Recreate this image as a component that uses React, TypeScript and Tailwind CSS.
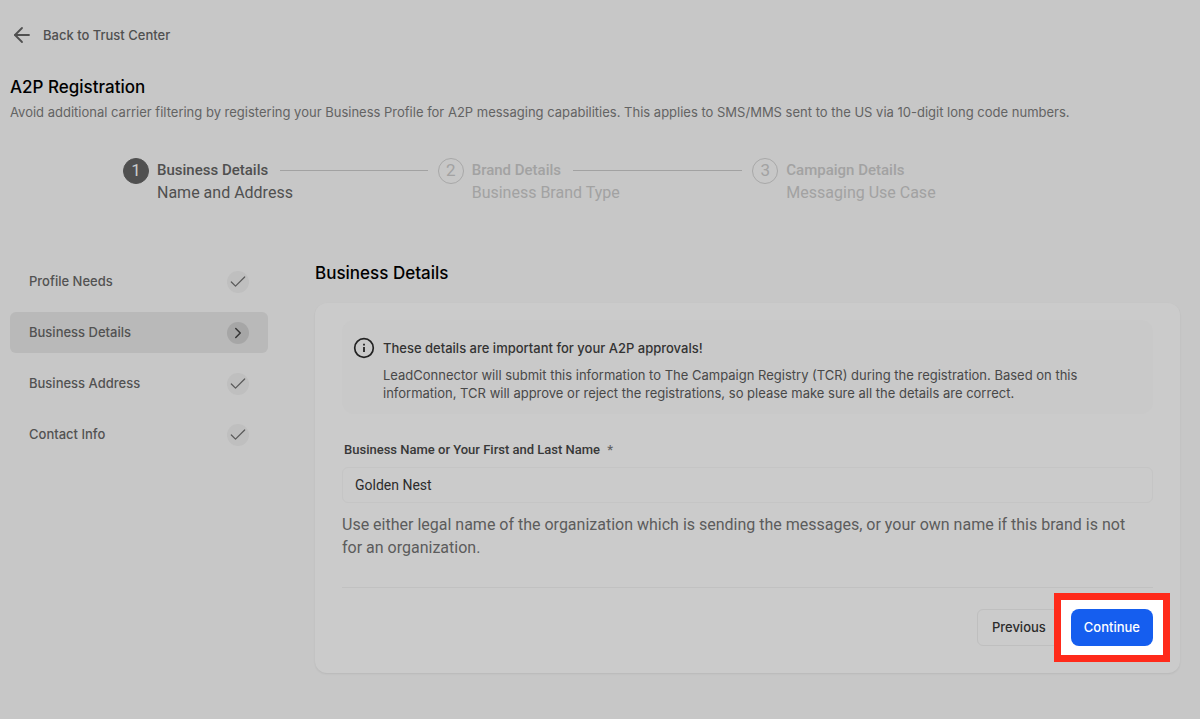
import React, { useState } from 'react';
import { ArrowLeft, Check, ChevronRight } from 'lucide-react';

const steps = [
  { title: 'Business Details', caption: 'Name and Address' },
  { title: 'Brand Details', caption: 'Business Brand Type' },
  { title: 'Campaign Details', caption: 'Messaging Use Case' },
];

const sections = ['Profile Needs', 'Business Details', 'Business Address', 'Contact Info'];

function InfoIcon() {
  return (
    <svg width="22" height="22" viewBox="0 0 22 22" fill="none" stroke="currentColor" className="shrink-0 text-[#222222]">
      <circle cx="11" cy="11" r="9.3" strokeWidth="1.7" />
      <path d="M11 10v5" strokeWidth="1.8" />
      <path d="M11 6.8v1.6" strokeWidth="1.8" />
    </svg>
  );
}

function Stepper({ current }: { current: number }) {
  return (
    <ol className="mx-[113px] mt-9 grid grid-cols-3 font-[Roboto,sans-serif]">
      {steps.map((step, index) => {
        const active = index === current;
        return (
          <li key={step.title} className={`flex gap-2 ${active ? 'text-[#505050]' : 'text-[#a2a2a2]'}`}>
            <span
              className={`flex h-[26px] w-[26px] shrink-0 items-center justify-center rounded-full border text-[17px] ${
                active ? 'border-[#505050] bg-[#505050] text-[#cbcbcb]' : 'border-[#a8a8a8]'
              }`}
            >
              {index + 1}
            </span>
            <div className="min-w-0 flex-1">
              <div className="flex items-center gap-3 pr-[10px]">
                <span className="text-[15px] leading-6 font-medium whitespace-nowrap">{step.title}</span>
                {index < steps.length - 1 && <span className="h-px flex-1 bg-[#a2a2a2]" />}
              </div>
              <p className="text-base leading-[22px]">{step.caption}</p>
            </div>
          </li>
        );
      })}
    </ol>
  );
}

function SideNav({ active, onSelect }: { active: string; onSelect: (name: string) => void }) {
  return (
    <nav className="flex w-[258px] shrink-0 flex-col gap-[10px]">
      {sections.map((name) => {
        const selected = name === active;
        return (
          <button
            key={name}
            type="button"
            onClick={() => onSelect(name)}
            className={`flex h-[41px] items-center justify-between rounded-md px-[19px] text-[13px] font-medium text-[#525252] ${
              selected ? 'bg-[#b9b9b9]' : ''
            }`}
          >
            {name}
            <span
              className={`flex h-[22px] w-[22px] items-center justify-center rounded-full ${
                selected ? 'bg-[#a6a6a6] text-[#363636]' : 'bg-[#bfbfbf] text-[#5a5a5a]'
              }`}
            >
              {selected ? <ChevronRight size={18} strokeWidth={2} /> : <Check size={20} strokeWidth={1.5} />}
            </span>
          </button>
        );
      })}
    </nav>
  );
}

export default function App() {
  const [section, setSection] = useState('Business Details');
  const [businessName, setBusinessName] = useState('Golden Nest');

  return (
    <main className="min-h-screen bg-[#c7c7c7] pt-[23px] pr-5 pb-10 pl-[10px] font-[Inter,sans-serif] text-[#505050]">
      <a href="#trust-center" className="flex w-fit items-center gap-[9px] text-[13px] leading-6 font-medium">
        <ArrowLeft size={24} strokeWidth={1.8} />
        Back to Trust Center
      </a>

      <header className="mt-7">
        <h1 className="text-[17px] leading-6 font-medium text-black">A2P Registration</h1>
        <p className="mt-[3px] text-[13px] leading-5 text-[#636363]">
          Avoid additional carrier filtering by registering your Business Profile for A2P messaging capabilities. This
          applies to SMS/MMS sent to the US via 10-digit long code numbers.
        </p>
      </header>

      <Stepper current={0} />

      <div className="mt-[57px] flex items-start gap-[47px]">
        <SideNav active={section} onSelect={setSection} />

        <section className="min-w-0 flex-1">
          <h2 className="text-[17px] leading-6 font-medium text-black">Business Details</h2>

          <form
            onSubmit={(e) => e.preventDefault()}
            className="mt-[18px] rounded-xl bg-[#cbcbcb] px-[27px] pt-[17px] pb-[27px] shadow-[0_1px_2px_rgba(0,0,0,0.08)]"
          >
            <div className="flex gap-2 rounded-xl bg-[#c9c9c9] px-[11px] pt-[17px] pb-3">
              <InfoIcon />
              <div className="text-[13px]">
                <p className="leading-[22px] font-medium text-[#333333]">
                  These details are important for your A2P approvals!
                </p>
                <p className="mt-[7px] leading-[18px] text-[#484848]">
                  LeadConnector will submit this information to The Campaign Registry (TCR) during the registration.
                  Based on this information, TCR will approve or reject the registrations, so please make sure all the
                  details are correct.
                </p>
              </div>
            </div>

            <div className="mt-[26px] font-[Roboto,sans-serif]">
              <label htmlFor="business-name" className="block px-[2px] text-[13px] leading-5 font-medium text-[#383838]">
                Business Name or Your First and Last Name <span className="ml-1 text-[#636363]">*</span>
              </label>
              <input
                id="business-name"
                type="text"
                value={businessName}
                onChange={(e) => setBusinessName(e.target.value)}
                className="mt-[7px] h-[36px] w-full rounded-md border border-[#c5c5c5] bg-[#cbcbcb] px-3 text-sm text-[#2c2c2c] outline-none"
              />
              <p className="mt-[10px] pr-5 text-base leading-[23px] text-[#5c5c5c]">
                Use either legal name of the organization which is sending the messages, or your own name if this brand
                is not for an organization.
              </p>
            </div>

            <hr className="mt-7 border-[#c1c1c1]" />

            <div className="mt-[21px] flex justify-end gap-[10px] text-[13px] font-medium">
              <button type="button" className="h-[37px] rounded-md border border-[#bfbfbf] px-[14px] text-[#2c2c2c]">
                Previous
              </button>
              <div className="relative">
                <div className="absolute -inset-x-[17px] -inset-y-4 border-[7px] border-[#ff2a1a] bg-white" />
                <button type="submit" className="relative h-[37px] rounded-lg bg-[#155eef] px-[13px] text-white">
                  Continue
                </button>
              </div>
            </div>
          </form>
        </section>
      </div>
    </main>
  );
}
